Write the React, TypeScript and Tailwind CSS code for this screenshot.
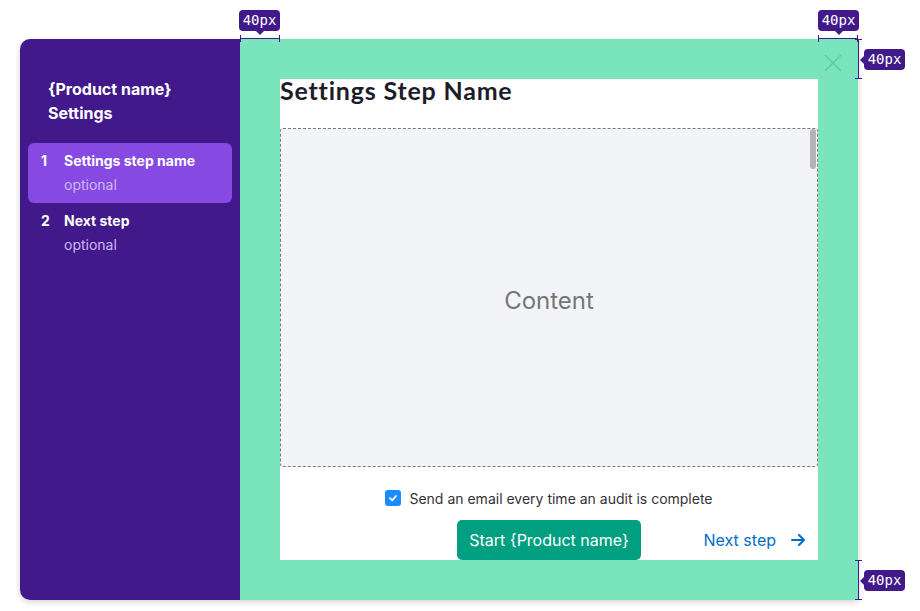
import React from "react";

const steps = [
  { num: 1, name: "Settings step name", note: "optional", active: true },
  { num: 2, name: "Next step", note: "optional", active: false },
];

// little "40px" spacing tag drawn over the mockup
const Tag: React.FC<{ pointer: "down" | "left"; className: string }> = ({ pointer, className }) => (
  <div className={`absolute ${className}`}>
    <div className="relative rounded-[4px] bg-[#42198a] w-[41px] h-[21px] flex items-center justify-center text-[14px] text-white font-['DejaVu_Sans_Mono',monospace]">
      40px
      {pointer === "down" ? (
        <span className="absolute left-1/2 -translate-x-1/2 -bottom-[4px] w-0 h-0 border-l-[4px] border-r-[4px] border-t-[4px] border-l-transparent border-r-transparent border-t-[#42198a]" />
      ) : (
        <span className="absolute top-1/2 -translate-y-1/2 -left-[4px] w-0 h-0 border-t-[4px] border-b-[4px] border-r-[4px] border-t-transparent border-b-transparent border-r-[#42198a]" />
      )}
    </div>
  </div>
);

const HBracket: React.FC<{ className: string }> = ({ className }) => (
  <div className={`absolute h-[7px] w-[40px] ${className}`}>
    <div className="absolute left-0 right-0 top-[3px] h-px bg-[#42198a]" />
    <div className="absolute left-0 top-0 h-[7px] w-px bg-[#42198a]" />
    <div className="absolute right-0 top-0 h-[7px] w-px bg-[#42198a]" />
  </div>
);

const VBracket: React.FC<{ className: string }> = ({ className }) => (
  <div className={`absolute w-[7px] h-[40px] ${className}`}>
    <div className="absolute top-0 bottom-0 left-[3px] w-px bg-[#42198a]" />
    <div className="absolute top-0 left-0 w-[7px] h-px bg-[#42198a]" />
    <div className="absolute bottom-0 left-0 w-[7px] h-px bg-[#42198a]" />
  </div>
);

export default function App() {
  return (
    <div className="relative w-[920px] h-[611px] bg-white font-['Inter',sans-serif] overflow-hidden">
      <div className="pt-[39px] pl-[20px]">
        <div className="flex w-[838px] h-[561px] rounded-l-[10px] shadow-[0_2px_6px_rgba(0,0,0,0.18)]">
          {/* sidebar */}
          <div className="w-[220px] shrink-0 bg-[#42198a] rounded-l-[10px] pt-[38px] px-[8px]">
            <div className="px-[20px] text-[16px] leading-[24px] font-bold text-white">
              <div>{"{Product name}"}</div>
              <div>Settings</div>
            </div>
            <div className="mt-[18px] flex flex-col">
              {steps.map((s) => (
                <div
                  key={s.num}
                  className={`flex h-[60px] rounded-[6px] pl-[13px] pt-[6px] text-[14px] leading-[24px] ${
                    s.active ? "bg-[#8649e1]" : ""
                  }`}
                >
                  <span className="w-[23px] font-bold text-white">{s.num}</span>
                  <div>
                    <div className="font-bold text-white">{s.name}</div>
                    <div className="text-[#cdb8f2]">{s.note}</div>
                  </div>
                </div>
              ))}
            </div>
          </div>

          {/* main */}
          <div className="relative flex-1 bg-[#7ae5bd] p-[40px]">
            <button className="absolute right-[15px] top-[14px] text-[#5ecca3]">
              <svg width="20" height="20" viewBox="0 0 20 20" fill="none" stroke="currentColor" strokeWidth="1.6">
                <path d="M2 2L18 18M18 2L2 18" />
              </svg>
            </button>
            <div className="flex h-full flex-col bg-white">
              <h1 className="shrink-0 text-[25px] leading-[23px] font-bold text-[#1d1c29] font-['Lato',sans-serif] tracking-[0.8px]">
                Settings Step Name
              </h1>
              <div className="relative shrink-0 mt-[26px] h-[339px] pt-[6px] rounded-[3px] border border-dashed border-[#7a7a80] bg-[#f3f4f8] flex items-center justify-center overflow-hidden">
                <span className="text-[24px] text-[#767679]">Content</span>
                <div className="absolute right-[1px] top-0 h-[40px] w-[6px] rounded-full bg-[#b3b3b8]" />
              </div>
              <label className="shrink-0 mt-[21px] h-[20px] flex items-center justify-center gap-[8px] text-[14px] text-[#333338]">
                <span className="flex h-[16px] w-[16px] items-center justify-center rounded-[3px] bg-[#1a8cff]">
                  <svg width="10" height="10" viewBox="0 0 10 10" fill="none" stroke="white" strokeWidth="1.8" strokeLinecap="round" strokeLinejoin="round">
                    <path d="M2 5.2L4.2 7.3L8 3" />
                  </svg>
                </span>
                Send an email every time an audit is complete
              </label>
              <div className="shrink-0 mt-[12px] grid grid-cols-[1fr_auto_1fr] items-center">
                <div />
                <button className="h-[40px] rounded-[5px] bg-[#009f81] px-[12px] text-[16px] text-white">
                  Start {"{Product name}"}
                </button>
                <div className="flex justify-end items-center gap-[15px] pr-[13px] text-[16px] text-[#006dca]">
                  Next step
                  <svg width="14" height="14" viewBox="0 0 14 14" fill="none" stroke="currentColor" strokeWidth="2" strokeLinecap="round" strokeLinejoin="round">
                    <path d="M1 7H13M8 2L13 7L8 12" />
                  </svg>
                </div>
              </div>
            </div>
          </div>
        </div>
      </div>

      {/* spacing annotations */}
      <Tag pointer="down" className="left-[239px] top-[10px]" />
      <HBracket className="left-[240px] top-[35px]" />
      <Tag pointer="down" className="left-[818px] top-[10px]" />
      <HBracket className="left-[818px] top-[35px]" />
      <VBracket className="left-[855px] top-[39px]" />
      <Tag pointer="left" className="left-[864px] top-[49px]" />
      <VBracket className="left-[855px] top-[560px]" />
      <Tag pointer="left" className="left-[864px] top-[570px]" />
    </div>
  );
}
